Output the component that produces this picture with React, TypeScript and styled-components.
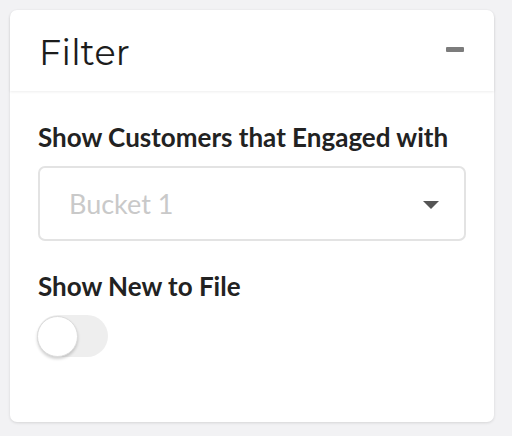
import styled, { createGlobalStyle } from "styled-components";

const GlobalStyle = createGlobalStyle`
  * { box-sizing: border-box; }
  body {
    margin: 0;
    background: #f2f2f4;
    font-family: 'Lato', sans-serif;
    color: #222;
  }
`;

const Page = styled.div`
  padding: 10px 18px 14px 10px;
`;

const Card = styled.div`
  background: #fff;
  border-radius: 7px;
  box-shadow: 0 1px 3px rgba(0, 0, 0, 0.12);
  height: 412px;
  display: flex;
  flex-direction: column;
`;

const Header = styled.div`
  height: 81px;
  display: flex;
  align-items: center;
  justify-content: space-between;
  padding: 4px 30px 0 29px;
  border-radius: 7px 7px 0 0;
  box-shadow: 0 1px 3px rgba(0, 0, 0, 0.07);
  position: relative;
  z-index: 1;
`;

const Title = styled.h2`
  margin: 0;
  font-family: 'Montserrat', 'Open Sans', sans-serif;
  font-weight: 400;
  font-size: 35px;
  color: #1c1c1c;
  letter-spacing: 0.3px;
`;

const Collapse = styled.button`
  width: 18px;
  height: 5px;
  padding: 0;
  border: none;
  border-radius: 1px;
  background: #7c7c7c;
  margin-top: -6px;
`;

const Body = styled.div`
  padding: 31px 28px 0 28px;
  display: flex;
  flex-direction: column;
`;

const Label = styled.div`
  font-weight: 700;
  font-size: 26px;
  line-height: 30px;
  color: #222;
`;

const Select = styled.div`
  margin-top: 14px;
  height: 75px;
  border: 2px solid #e3e3e3;
  border-radius: 7px;
  display: flex;
  align-items: center;
  justify-content: space-between;
  padding: 0 25px 0 29px;
  font-size: 27px;
  color: #c9c9c9;
`;

const Caret = styled.span`
  width: 0;
  height: 0;
  border-left: 8px solid transparent;
  border-right: 8px solid transparent;
  border-top: 8px solid #555;
  margin-top: 2px;
`;

const Section = styled.div`
  margin-top: 30px;
`;

const Track = styled.div<{ on?: boolean }>`
  margin-top: 14px;
  width: 71px;
  height: 42px;
  border-radius: 21px;
  background: ${(p) => (p.on ? "#4caf50" : "#eeeeee")};
  display: flex;
  align-items: center;
  justify-content: ${(p) => (p.on ? "flex-end" : "flex-start")};
  margin-left: -1px;
`;

const Knob = styled.div`
  width: 41px;
  height: 41px;
  border-radius: 50%;
  background: #fff;
  border: 1px solid #dcdcdc;
  box-shadow: 0 2px 3px rgba(0, 0, 0, 0.18);
`;

export default function App() {
  return (
    <>
      <GlobalStyle />
      <Page>
        <Card>
          <Header>
            <Title>Filter</Title>
            <Collapse aria-label="collapse" />
          </Header>
          <Body>
            <Label>Show Customers that Engaged with</Label>
            <Select>
              <span>Bucket 1</span>
              <Caret />
            </Select>
            <Section>
              <Label>Show New to File</Label>
              <Track>
                <Knob />
              </Track>
            </Section>
          </Body>
        </Card>
      </Page>
    </>
  );
}
